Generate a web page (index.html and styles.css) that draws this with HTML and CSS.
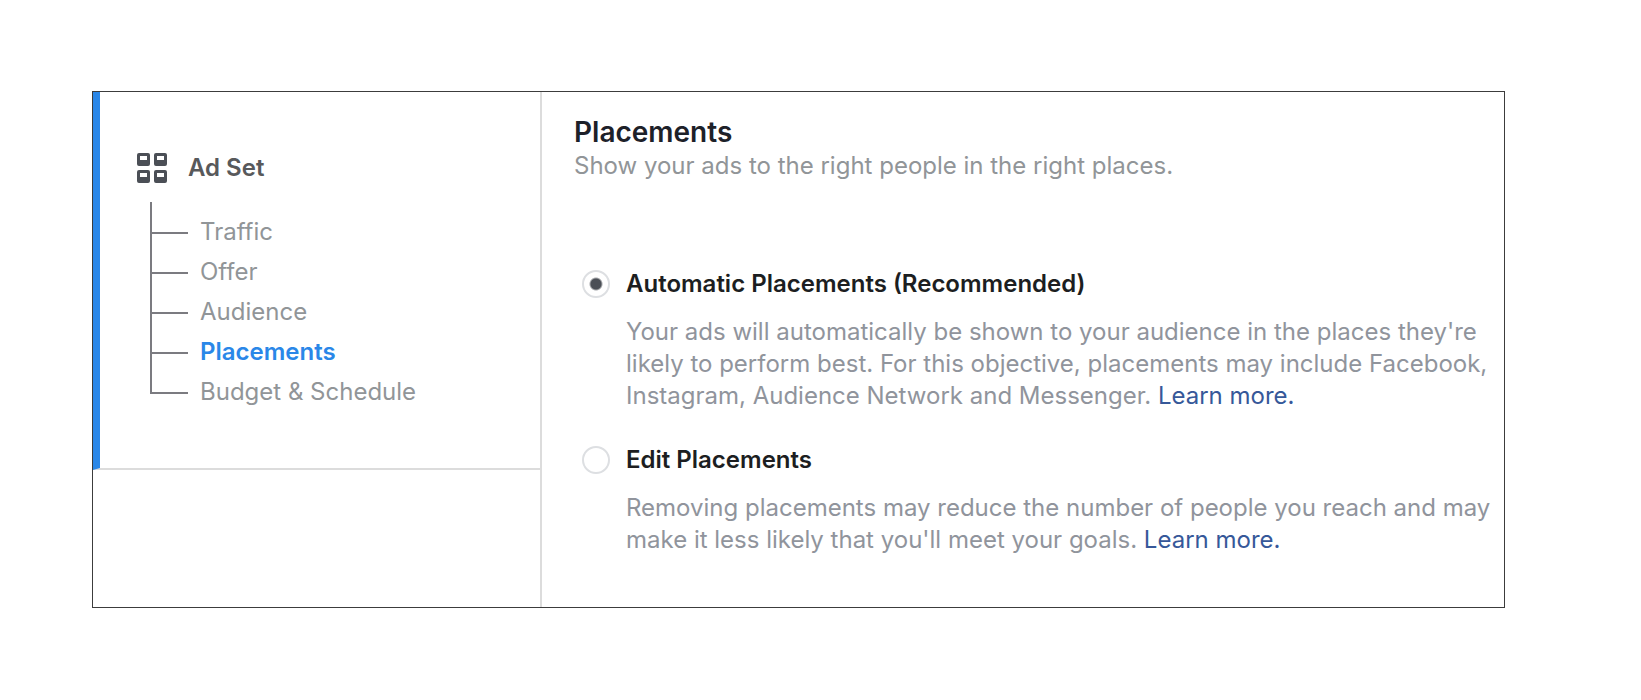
FILE: index.html
```html
<!DOCTYPE html>
<html lang="en">
<head>
    <meta charset="UTF-8">
    <meta name="viewport" content="width=device-width, initial-scale=1.0">
    <title>Placements</title>
    <link rel="stylesheet" href="styles.css">
</head>
<body>
    <div class="panel">
        <!-- Sidebar -->
        <aside class="sidebar">
            <nav class="ad-set">
                <div class="ad-set-title">
                    <svg class="ad-set-icon" width="30" height="30" viewBox="0 0 30 30" fill="#4b4f56" fill-rule="evenodd" aria-hidden="true">
                        <path d="M2 0h9a2 2 0 0 1 2 2v9a2 2 0 0 1-2 2H2a2 2 0 0 1-2-2V2a2 2 0 0 1 2-2zM3 3v4h7V3z"/>
                        <path d="M19 0h9a2 2 0 0 1 2 2v9a2 2 0 0 1-2 2h-9a2 2 0 0 1-2-2V2a2 2 0 0 1 2-2zM20 3v4h7V3z"/>
                        <path d="M2 17h9a2 2 0 0 1 2 2v9a2 2 0 0 1-2 2H2a2 2 0 0 1-2-2v-9a2 2 0 0 1 2-2zM3 20v4h7v-4z"/>
                        <path d="M19 17h9a2 2 0 0 1 2 2v9a2 2 0 0 1-2 2h-9a2 2 0 0 1-2-2v-9a2 2 0 0 1 2-2zM20 20v4h7v-4z"/>
                    </svg>
                    <h2>Ad Set</h2>
                </div>
                <ul class="steps">
                    <li><a href="#traffic">Traffic</a></li>
                    <li><a href="#offer">Offer</a></li>
                    <li><a href="#audience">Audience</a></li>
                    <li><a href="#placements" class="active">Placements</a></li>
                    <li><a href="#budget">Budget &amp; Schedule</a></li>
                </ul>
            </nav>
        </aside>

        <!-- Placements form -->
        <main class="content" id="placements">
            <h1>Placements</h1>
            <p class="subtitle">Show your ads to the right people in the right places.</p>

            <form class="options">
                <div class="option">
                    <input type="radio" id="automatic" name="placement" value="automatic" checked>
                    <label for="automatic">Automatic Placements (Recommended)</label>
                    <p>Your ads will automatically be shown to your audience in the places they're likely to perform best. For this objective, placements may include Facebook, Instagram, Audience Network and Messenger. <a href="#learn-automatic">Learn more.</a></p>
                </div>
                <div class="option">
                    <input type="radio" id="edit" name="placement" value="edit">
                    <label for="edit">Edit Placements</label>
                    <p>Removing placements may reduce the number of people you reach and may make it less likely that you'll meet your goals. <a href="#learn-edit">Learn more.</a></p>
                </div>
            </form>
        </main>
    </div>
</body>
</html>
```
FILE: styles.css
```css
* {
    box-sizing: border-box;
}
body {
    margin: 0;
    padding: 91px 136px 91px 92px;
    background-color: #fff;
    font-family: Inter, "Liberation Sans", sans-serif;
    font-size: 24px;
    line-height: 32px;
    color: #90949c;
}
h1, h2, p, ul {
    margin: 0;
    padding: 0;
}
a {
    text-decoration: none;
}
.panel {
    display: flex;
    border: 1px solid #3c3c3c;
}

/* Sidebar */
.sidebar {
    flex: 0 0 449px;
    border-right: 2px solid #dcdcdc;
}
.ad-set {
    padding: 60px 16px 56px 37px;
    border-left: 7px solid #2a87e8;
    border-bottom: 2px solid #dcdcdc;
}
.ad-set-title {
    display: flex;
    align-items: center;
    gap: 21px;
}
.ad-set-title h2 {
    font-size: 24px;
    font-weight: 600;
    color: #58595b;
}
.steps {
    list-style: none;
    margin: 28px 0 0 13px;
}
.steps li {
    position: relative;
    padding: 4px 0 4px 50px;
}
/* tree lines */
.steps li::before {
    content: "";
    position: absolute;
    left: 0;
    top: -18px;
    bottom: 18px;
    width: 36px;
    border-left: 2px solid #7b7b80;
    border-bottom: 2px solid #7b7b80;
}
.steps li:first-child::before {
    top: -10px;
}
.steps a {
    color: #919598;
}
.steps a.active {
    color: #2a87e8;
    font-weight: 600;
}

/* Content */
.content {
    flex: 1;
    min-width: 0;
    padding: 24px 12px 51px 32px;
}
h1 {
    font-size: 28px;
    font-weight: 600;
    color: #1d2129;
}
.subtitle {
    margin-top: 2px;
    color: #919598;
}
.options {
    display: flex;
    flex-direction: column;
    gap: 32px;
    margin-top: 86px;
    padding-left: 8px;
}
.option {
    display: grid;
    grid-template-columns: 28px 1fr;
    column-gap: 16px;
    row-gap: 16px;
    align-items: center;
}
.option input {
    appearance: none;
    width: 28px;
    height: 28px;
    margin: 0;
    border: 2px solid #dddfe2;
    border-radius: 50%;
    background-color: #fff;
}
.option input:checked {
    background-image: radial-gradient(circle, #4b4f56 5px, transparent 7px);
}
.option label {
    font-weight: 600;
    color: #1c1e21;
}
.option p {
    grid-column: 2;
}
.option p a {
    color: #365899;
}
```
